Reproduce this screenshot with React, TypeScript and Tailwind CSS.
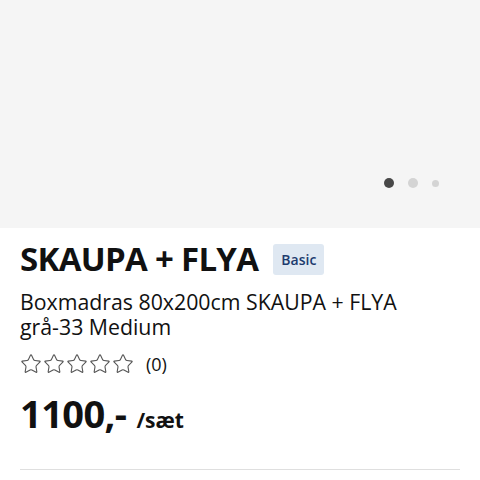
import { Star } from "lucide-react";

export default function App() {
  const font = { fontFamily: '"Open Sans", "Noto Sans", sans-serif' };

  return (
    <div className="h-[480px] w-[480px] overflow-hidden bg-white" style={font}>
      {/* image carousel placeholder */}
      <div className="relative h-[228px] bg-[#f5f5f5]">
        <div className="absolute left-[384px] top-[178px] flex items-center gap-[14px]">
          <span className="h-[10px] w-[10px] rounded-full bg-[#484848]" />
          <span className="h-[10px] w-[10px] rounded-full bg-[#d4d4d4]" />
          <span className="h-[7px] w-[7px] rounded-full bg-[#d4d4d4]" />
        </div>
      </div>

      <div className="px-5">
        <div className="mt-[11px] flex items-center gap-[15px]">
          <h1 className="text-[33px] font-bold leading-[40px] tracking-[-0.7px] text-[#111]">
            SKAUPA + FLYA
          </h1>
          <span className="h-[31px] rounded-[3px] bg-[#dfe8f2] px-[8px] text-[14px] font-semibold leading-[31px] text-[#1d3b6e]">
            Basic
          </span>
        </div>

        <p className="mt-[10px] text-[21.3px] leading-[25px] text-[#111]">
          Boxmadras 80x200cm SKAUPA + FLYA
          <br />
          grå-33 Medium
        </p>

        <div className="mt-[14px] flex h-[22px] items-center gap-[12px]">
          <div className="flex gap-[1px]">
            {[0, 1, 2, 3, 4].map((i) => (
              <Star key={i} size={22} strokeWidth={1.2} className="text-[#555]" />
            ))}
          </div>
          <span className="text-[18px] leading-[22px] text-[#111]">(0)</span>
        </div>

        <div className="mt-[15px] flex items-baseline gap-[10px]">
          <span className="text-[38px] font-bold leading-[46px] tracking-[-0.6px] text-[#111]">
            1100,-
          </span>
          <span className="text-[21px] font-bold text-[#111]">/sæt</span>
        </div>

        <div className="mt-[32px] h-px bg-[#dfdfdf]" />
      </div>
    </div>
  );
}
